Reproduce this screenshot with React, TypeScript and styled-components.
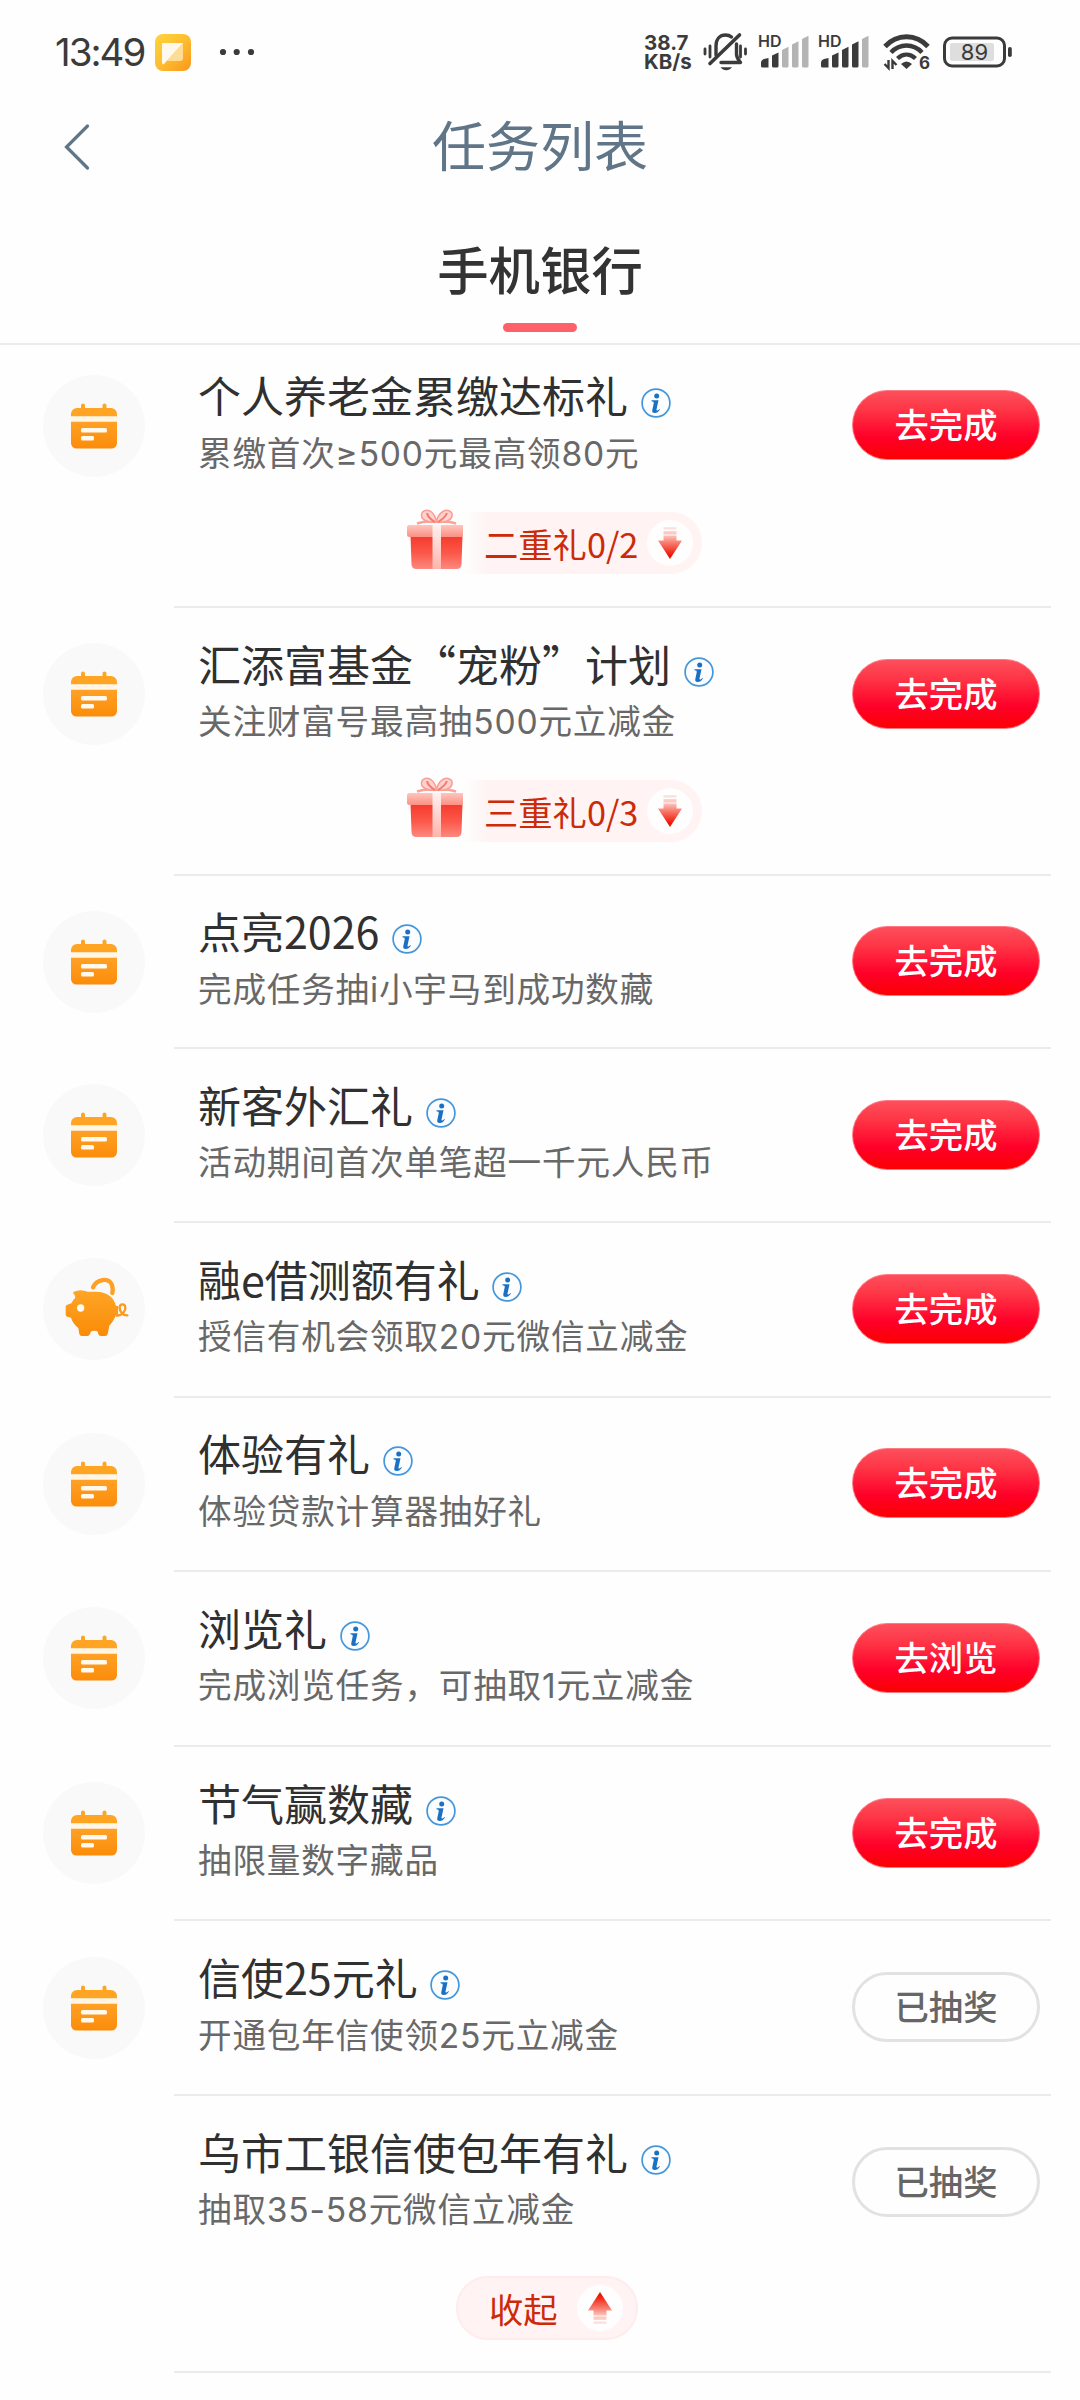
import React from "react";
import styled, { createGlobalStyle } from "styled-components";

const GlobalStyle = createGlobalStyle`
  * { box-sizing: border-box; }
  html, body { margin: 0; padding: 0; background: #fefefe; }
  body { font-family: "Noto Sans CJK SC", sans-serif; color: #333; }
  svg { display: block; flex: none; overflow: visible; }
`;

const Screen = styled.div`
  width: 1080px;
  height: 2400px;
  overflow: hidden;
  background: #fefefe;
  display: flex;
  flex-direction: column;
`;

const StatusBar = styled.header`
  height: 104px;
  flex: none;
  display: flex;
  align-items: center;
  justify-content: space-between;
  padding: 0 68px 0 55px;
  color: #3b3b3b;
  font-family: Inter, sans-serif;
`;

const StatusGroup = styled.div`
  display: flex;
  align-items: center;
`;

const Clock = styled.span`
  width: 100px;
  font-size: 38.5px;
  line-height: 48px;
  letter-spacing: -2px;
  white-space: nowrap;
`;

const Speed = styled.div`
  width: 59px;
  display: flex;
  flex-direction: column;
  font-size: 20.5px;
  font-weight: 700;
  line-height: 19px;
`;

const Signals = styled.div`
  display: flex;
  margin-right: 4px;
`;

const TitleBar = styled.div`
  height: 86px;
  flex: none;
  display: grid;
  grid-template-columns: 180px 1fr 180px;
  align-items: center;
`;

const BackButton = styled.button`
  border: 0;
  background: none;
  padding: 0 0 0 64px;
`;

const PageTitle = styled.h1`
  margin: -6px 0 0;
  text-align: center;
  font-size: 54px;
  line-height: 72px;
  font-weight: 400;
  color: #607688;
`;

const TabBar = styled.nav`
  height: 155px;
  flex: none;
  display: flex;
  justify-content: center;
  border-bottom: 2px solid #ebebeb;
`;

const Tab = styled.div`
  display: flex;
  flex-direction: column;
  align-items: center;
  padding-top: 42px;
  font-size: 51.4px;
  line-height: 72px;
  font-weight: 500;
  color: #333;

  &::after {
    content: "";
    width: 74px;
    height: 9px;
    margin-top: 19px;
    border-radius: 5px;
    background: #ff616b;
  }
`;

const List = styled.main`
  margin-top: -5.5px;
`;

const Row = styled.section<{ $height: number }>`
  height: ${(p) => p.$height}px;
  display: flex;
  flex-direction: column;

  &::after {
    content: "";
    height: 2px;
    margin: auto 29px 0 174px;
    background: #ebebeb;
  }
`;

const RowMain = styled.div`
  height: 171.5px;
  flex: none;
  display: flex;
  align-items: center;
  padding: 0 40px 0 43px;
`;

const IconDisc = styled.div<{ $empty?: boolean }>`
  width: 102px;
  height: 102px;
  flex: none;
  margin-top: 1px;
  border-radius: 50%;
  display: flex;
  align-items: center;
  justify-content: center;
  background: ${(p) => (p.$empty ? "transparent" : "#f9f9f9")};
`;

const Body = styled.div`
  flex: 1;
  min-width: 0;
  margin: -3px 0 0 53px;
`;

const TitleLine = styled.div`
  height: 58px;
  display: flex;
  align-items: center;
  gap: 12.5px;

  svg { margin-top: 17px; }
`;

const Title = styled.h2`
  margin: -1px 0 0;
  font-size: 43px;
  line-height: 58px;
  font-weight: 400;
  white-space: nowrap;
  color: #303030;
`;

const Subtitle = styled.p`
  margin: 1px 0 -1px;
  font-family: Inter, "Noto Sans CJK SC", sans-serif;
  font-size: 33.6px;
  line-height: 58px;
  letter-spacing: 0.82px;
  white-space: nowrap;
  color: #686868;
`;

const Action = styled.button<{ $done?: boolean }>`
  width: 188px;
  height: 70px;
  flex: none;
  padding: 0 0 4px;
  border-radius: 35px;
  border: ${(p) => (p.$done ? "3px solid #e2e2e2" : "1px solid #ff7a82")};
  background: ${(p) =>
    p.$done ? "#fefefe" : "linear-gradient(#fd4f5c 0%, #fe3546 28%, #ff0029 68%, #fb0003 100%)"};
  color: ${(p) => (p.$done ? "#666" : "#fff")};
  font-family: "Noto Sans CJK SC", sans-serif;
  font-size: 34.3px;
  line-height: 50px;
  font-weight: 500;
`;

const GiftToggle = styled.div`
  display: flex;
  align-items: center;
  height: 63px;
  padding-left: 407px;

  > svg { margin: -7px -3px 0 0; }
`;

const GiftPill = styled.div`
  width: 239px;
  height: 62px;
  display: flex;
  align-items: center;
  justify-content: space-between;
  padding: 0 9px 0 21px;
  border-radius: 0 31px 31px 0;
  background: linear-gradient(90deg, #fefefe 0, #fff3f3 26px);
`;

const CollapseBox = styled.div`
  display: flex;
  padding: 8.5px 0 0 456px;
`;

const CollapsePill = styled.div`
  width: 182px;
  height: 64px;
  display: flex;
  align-items: center;
  justify-content: space-between;
  padding: 0 13px 0 31px;
  border: 2px solid #ffecec;
  border-radius: 32px;
  background: #fff3f3;
`;

const PillText = styled.span`
  font-size: 34.3px;
  line-height: 50px;
  color: #cc2a08;
  white-space: nowrap;
`;

const ArrowDisc = styled.span<{ $up?: boolean }>`
  width: 46px;
  height: 46px;
  border-radius: 50%;
  display: flex;
  align-items: center;
  justify-content: center;
  background: #fefefe;

  svg { transform: ${(p) => (p.$up ? "rotate(180deg)" : "none")}; }
`;

const AppBadge = () => (
  <svg width="36" height="37" viewBox="0 0 36 37">
    <defs>
      <linearGradient id="badge" x1="0" y1="0" x2="1" y2="1">
        <stop offset="0" stopColor="#ffd43e" />
        <stop offset="0.5" stopColor="#fdbd30" />
        <stop offset="1" stopColor="#fb961c" />
      </linearGradient>
    </defs>
    <rect width="36" height="37" rx="8" fill="url(#badge)" />
    <path d="M28 9v15a3 3 0 0 1-3 3H12z" fill="#ffdc96" />
    <path d="M7 9h21L9 30Q7 31 7 28z" fill="#fff8ec" />
  </svg>
);

const DotsSvg = styled.svg`
  margin-left: 28px;
`;

const Dots = () => (
  <DotsSvg width="36" height="8" viewBox="0 0 36 8" fill="#3b3b3b">
    <circle cx="4" cy="4" r="3.1" />
    <circle cx="17.7" cy="4" r="3.1" />
    <circle cx="32" cy="4" r="3.1" />
  </DotsSvg>
);

const MutedBell = () => (
  <svg width="56" height="40" viewBox="0 0 56 40" fill="none" stroke="#3b3b3b" strokeLinecap="round">
    <path d="M2 17v5M7 14v11M37.5 14v11M42.5 17v5" strokeWidth="2.8" />
    <path d="M13 23V14C13 7 17 3 22.5 3c2.5 0 4.5.7 6 2" strokeWidth="3.4" />
    <path d="M33.5 12v10c0 4 1.5 5.5 4 8.5H18" strokeWidth="3.4" strokeLinejoin="round" />
    <path d="M7 31.5L36.5 3" strokeWidth="3.6" />
    <path d="M17.5 35.2h11.500c-1.500 2-3.500 3-5.800 3s-4.200-1-5.700-3z" fill="#3b3b3b" stroke="none" />
  </svg>
);

const bars = [
  "M0 30v-3q0-3 3-4l4.500-1v9.500h-6q-1.500 0-1.500-1.500z",
  "M11 30V19.500l6.500-3V30q0 1.500-1.500 1.500h-3.500q-1.500 0-1.500-1.500z",
  "M21 30V14l6.500-3.200V30q0 1.500-1.500 1.500h-3.500q-1.500 0-1.500-1.500z",
  "M31 30V8.500l6.500-3.200V30q0 1.500-1.500 1.500h-3.500q-1.500 0-1.500-1.500z",
  "M41 30V3l6.500-3.200V30q0 1.500-1.500 1.500h-3.500q-1.500 0-1.500-1.500z",
];

const Signal = ({ level }: { level: number }) => (
  <svg width="60" height="42" viewBox="-2 -5 60 42">
    {bars.map((d, i) => (
      <path key={i} d={d} fill={i < level ? "#3b3b3b" : "#b4b4b4"} />
    ))}
    <text x="-3" y="11" fontFamily="Inter, sans-serif" fontSize="16" fontWeight="600" fill="#3b3b3b">
      HD
    </text>
  </svg>
);

const Wifi = () => (
  <svg width="60" height="44" viewBox="0 -4 60 44" fill="none" stroke="#3b3b3b">
    <path d="M2 12.500C14 -.5 33 -.5 45 12.500" strokeWidth="4.8" />
    <path d="M8 18.500c9-9.200 22-9.200 31 0" strokeWidth="4.5" />
    <path d="M14.500 24.500c5.500-5.200 12.500-5.200 18 0" strokeWidth="4.3" />
    <path d="M18 30q5.500-5 11 0l-5.500 5z" fill="#3b3b3b" stroke="none" />
    <path d="M5.500 26v8l-4-4M9.500 35v-8l4 4" strokeWidth="2.4" />
    <text x="36" y="35" fontFamily="Inter, sans-serif" fontSize="17" fontWeight="700" fill="#3b3b3b" stroke="none">
      6
    </text>
  </svg>
);

const Battery = () => (
  <svg width="69" height="32" viewBox="0 0 69 32">
    <rect x="7" y="7" width="44" height="18" rx="2" fill="#dedede" />
    <rect x="1.500" y="2" width="60" height="28" rx="7.500" fill="none" stroke="#3b3b3b" strokeWidth="3" />
    <rect x="65" y="11" width="3.800" height="10" rx="1.800" fill="#3b3b3b" />
    <text x="31.500" y="23.500" textAnchor="middle" fontFamily="Inter, sans-serif" fontSize="22" fill="#3b3b3b">
      89
    </text>
  </svg>
);

const CalendarIcon = () => (
  <svg width="46" height="46" viewBox="0 0 46 46">
    <defs>
      <linearGradient id="cal" x1="0" y1="0" x2="0" y2="1">
        <stop offset="0" stopColor="#ffa126" />
        <stop offset="1" stopColor="#fb8c09" />
      </linearGradient>
    </defs>
    <path
      d="M10 5V2.500a2 2 0 0 1 4 0V5h17.500V2.500a2 2 0 0 1 4 0V5H40a6 6 0 0 1 6 6v2.500H0V11a6 6 0 0 1 6-6z"
      fill="#ffa523"
    />
    <path d="M0 18.500h46V40a5.500 5.500 0 0 1-5.500 5.500h-35A5.500 5.500 0 0 1 0 40z" fill="url(#cal)" />
    <rect y="13.500" width="46" height="5" fill="#fff6e6" />
    <rect x="10" y="25" width="26" height="4.600" rx="1.500" fill="#fff9ef" />
    <rect x="10" y="33" width="13" height="4.600" rx="1.500" fill="#fff9ef" />
  </svg>
);

const PiggyIcon = () => (
  <svg width="104" height="104" viewBox="37 52 312 312">
    <defs>
      <linearGradient id="pig" x1="0" y1="0" x2="0" y2="1">
        <stop offset="0" stopColor="#ffa526" />
        <stop offset="1" stopColor="#f98b08" />
      </linearGradient>
    </defs>
    <path d="M190 143C200 118 238 112 247 136q4 12 1 24" fill="none" stroke="#fda024" strokeWidth="13" strokeLinecap="round" />
    <path
      d="M132 156q20-9 42 0h24c38 0 60 20 63 54 0 22-14 38-22 48l-5 25q-1 6-8 6h-12q-7 0-8-6l-2-7q-2-3-9-3-10 0-12 4l-2 6q-2 6-8 6h-16q-7 0-8-6l-3-18q-16-12-22-31l-12-3q-4-1-4-7v-22q0-6 5-7l12-4q4-10 12-17 0-8-7-14z"
      fill="url(#pig)"
    />
    <circle cx="153" cy="205" r="11" fill="#fffaf0" />
    <path
      d="M264 228C280 226 288 212 287 203C286 191 270 191 270 204C270 216 280 228 293 227M262 202v26"
      fill="none"
      stroke="#fb9a20"
      strokeWidth="7"
      strokeLinecap="round"
    />
  </svg>
);

const InfoIcon = () => (
  <svg width="30" height="30" viewBox="0 0 30 30">
    <circle cx="15" cy="15" r="13.900" fill="#fbfdff" stroke="#4597dc" strokeWidth="1.700" />
    <circle cx="15.700" cy="8" r="2.500" fill="#1b70c4" />
    <path
      d="M10.500 12.200h7l-2 9.300q-.2 1.400 1 1 .9-.3 1.800-1.500l.6.500q-2 3.500-5.300 3.500-2.900 0-2.300-3l1.500-7q.3-1.500-2.300-1.700z"
      fill="#1b70c4"
    />
  </svg>
);

const GiftIcon = () => (
  <svg width="59" height="61" viewBox="0 0 59 61">
    <defs>
      <linearGradient id="giftBox" x1="0" y1="0" x2="0" y2="1">
        <stop offset="0" stopColor="#f53a2c" />
        <stop offset="0.550" stopColor="#fc5a4c" />
        <stop offset="1" stopColor="#fb8a80" />
      </linearGradient>
      <linearGradient id="giftLid" x1="0" y1="0" x2="0" y2="1">
        <stop offset="0" stopColor="#ffc5bd" />
        <stop offset="1" stopColor="#fb9085" />
      </linearGradient>
      <linearGradient id="ribbon" x1="0" y1="0" x2="0" y2="1">
        <stop offset="0" stopColor="#fff1ef" />
        <stop offset="1" stopColor="#ffb4ab" />
      </linearGradient>
    </defs>
    <path d="M10 14.500q9-3 18-1.500M49 14.500q-9-3-18-1.500" fill="none" stroke="#fba29b" strokeWidth="2.400" />
    <path
      d="M29 13C22 14 14 11 14.500 6 15 1 21 0 24.500 3 28 6 29 10 29.500 13 30 9 32 5 36 2.500 40 0 46 2 45 7 44 12 37 14 29 13z"
      fill="#ffd2cd"
      stroke="#fb9c95"
      strokeWidth="1.500"
    />
    <path d="M28 13Q21 9 20 4M31 13q7-4 9-9" fill="none" stroke="#f7786f" strokeWidth="2" />
    <path d="M3.500 27h52l-1 28q0 5-5 5h-40q-5 0-5-5z" fill="url(#giftBox)" />
    <rect x="0" y="16" width="59" height="12" rx="2.500" fill="url(#giftLid)" />
    <rect x="25.500" y="16" width="8.500" height="44" fill="url(#ribbon)" />
  </svg>
);

const ArrowIcon = ({ id }: { id: string }) => (
  <svg width="24" height="32" viewBox="0 0 24 32">
    <defs>
      <linearGradient id={id} gradientUnits="userSpaceOnUse" x1="0" y1="0" x2="0" y2="32">
        <stop offset="0" stopColor="#ffe6e2" />
        <stop offset="0.300" stopColor="#fdb9b1" />
        <stop offset="0.480" stopColor="#f88073" />
        <stop offset="0.900" stopColor="#ee1200" />
      </linearGradient>
    </defs>
    <path d="M5.500 0h13v2.500h-13zM5.500 4h13v3.500h-13zM5.500 8.500h13v5H24L12 32 0 13.500h5.500z" fill={`url(#${id})`} />
  </svg>
);

type Task = {
  title: string;
  sub: string;
  action: string;
  height: number;
  icon?: "calendar" | "piggy";
  done?: boolean;
  gift?: string;
  collapse?: boolean;
};

const tasks: Task[] = [
  { title: "个人养老金累缴达标礼", sub: "累缴首次≥500元最高领80元", action: "去完成", height: 268.5, icon: "calendar", gift: "二重礼0/2" },
  { title: "汇添富基金“宠粉”计划", sub: "关注财富号最高抽500元立减金", action: "去完成", height: 267.6, icon: "calendar", gift: "三重礼0/3" },
  { title: "点亮2026", sub: "完成任务抽i小宇马到成功数藏", action: "去完成", height: 173.5, icon: "calendar" },
  { title: "新客外汇礼", sub: "活动期间首次单笔超一千元人民币", action: "去完成", height: 174.1, icon: "calendar" },
  { title: "融e借测额有礼", sub: "授信有机会领取20元微信立减金", action: "去完成", height: 174.4, icon: "piggy" },
  { title: "体验有礼", sub: "体验贷款计算器抽好礼", action: "去完成", height: 174.6, icon: "calendar" },
  { title: "浏览礼", sub: "完成浏览任务，可抽取1元立减金", action: "去浏览", height: 174.6, icon: "calendar" },
  { title: "节气赢数藏", sub: "抽限量数字藏品", action: "去完成", height: 174.5, icon: "calendar" },
  { title: "信使25元礼", sub: "开通包年信使领25元立减金", action: "已抽奖", height: 174.5, icon: "calendar", done: true },
  { title: "乌市工银信使包年有礼", sub: "抽取35-58元微信立减金", action: "已抽奖", height: 277.3, done: true, collapse: true },
];

const TaskRow = ({ task, index }: { task: Task; index: number }) => (
  <Row $height={task.height}>
    <RowMain>
      <IconDisc $empty={!task.icon}>
        {task.icon === "calendar" && <CalendarIcon />}
        {task.icon === "piggy" && <PiggyIcon />}
      </IconDisc>
      <Body>
        <TitleLine>
          <Title>{task.title}</Title>
          <InfoIcon />
        </TitleLine>
        <Subtitle>{task.sub}</Subtitle>
      </Body>
      <Action $done={task.done}>{task.action}</Action>
    </RowMain>
    {task.gift && (
      <GiftToggle>
        <GiftIcon />
        <GiftPill>
          <PillText>{task.gift}</PillText>
          <ArrowDisc>
            <ArrowIcon id={`arrow${index}`} />
          </ArrowDisc>
        </GiftPill>
      </GiftToggle>
    )}
    {task.collapse && (
      <CollapseBox>
        <CollapsePill>
          <PillText>收起</PillText>
          <ArrowDisc $up>
            <ArrowIcon id={`arrow${index}`} />
          </ArrowDisc>
        </CollapsePill>
      </CollapseBox>
    )}
  </Row>
);

export default function App() {
  return (
    <>
      <GlobalStyle />
      <Screen>
        <StatusBar>
          <StatusGroup>
            <Clock>13:49</Clock>
            <AppBadge />
            <Dots />
          </StatusGroup>
          <StatusGroup>
            <Speed>
              <span>38.7</span>
              <span>KB/s</span>
            </Speed>
            <MutedBell />
            <Signals>
              <Signal level={2} />
              <Signal level={4} />
            </Signals>
            <Wifi />
            <Battery />
          </StatusGroup>
        </StatusBar>
        <TitleBar>
          <BackButton aria-label="返回">
            <svg width="26" height="46" viewBox="0 0 26 46" fill="none">
              <path d="M23.500 2L2.500 23l21 21" stroke="#607688" strokeWidth="3.200" strokeLinecap="round" />
            </svg>
          </BackButton>
          <PageTitle>任务列表</PageTitle>
        </TitleBar>
        <TabBar>
          <Tab>手机银行</Tab>
        </TabBar>
        <List>
          {tasks.map((task, i) => (
            <TaskRow key={task.title} task={task} index={i} />
          ))}
        </List>
      </Screen>
    </>
  );
}
